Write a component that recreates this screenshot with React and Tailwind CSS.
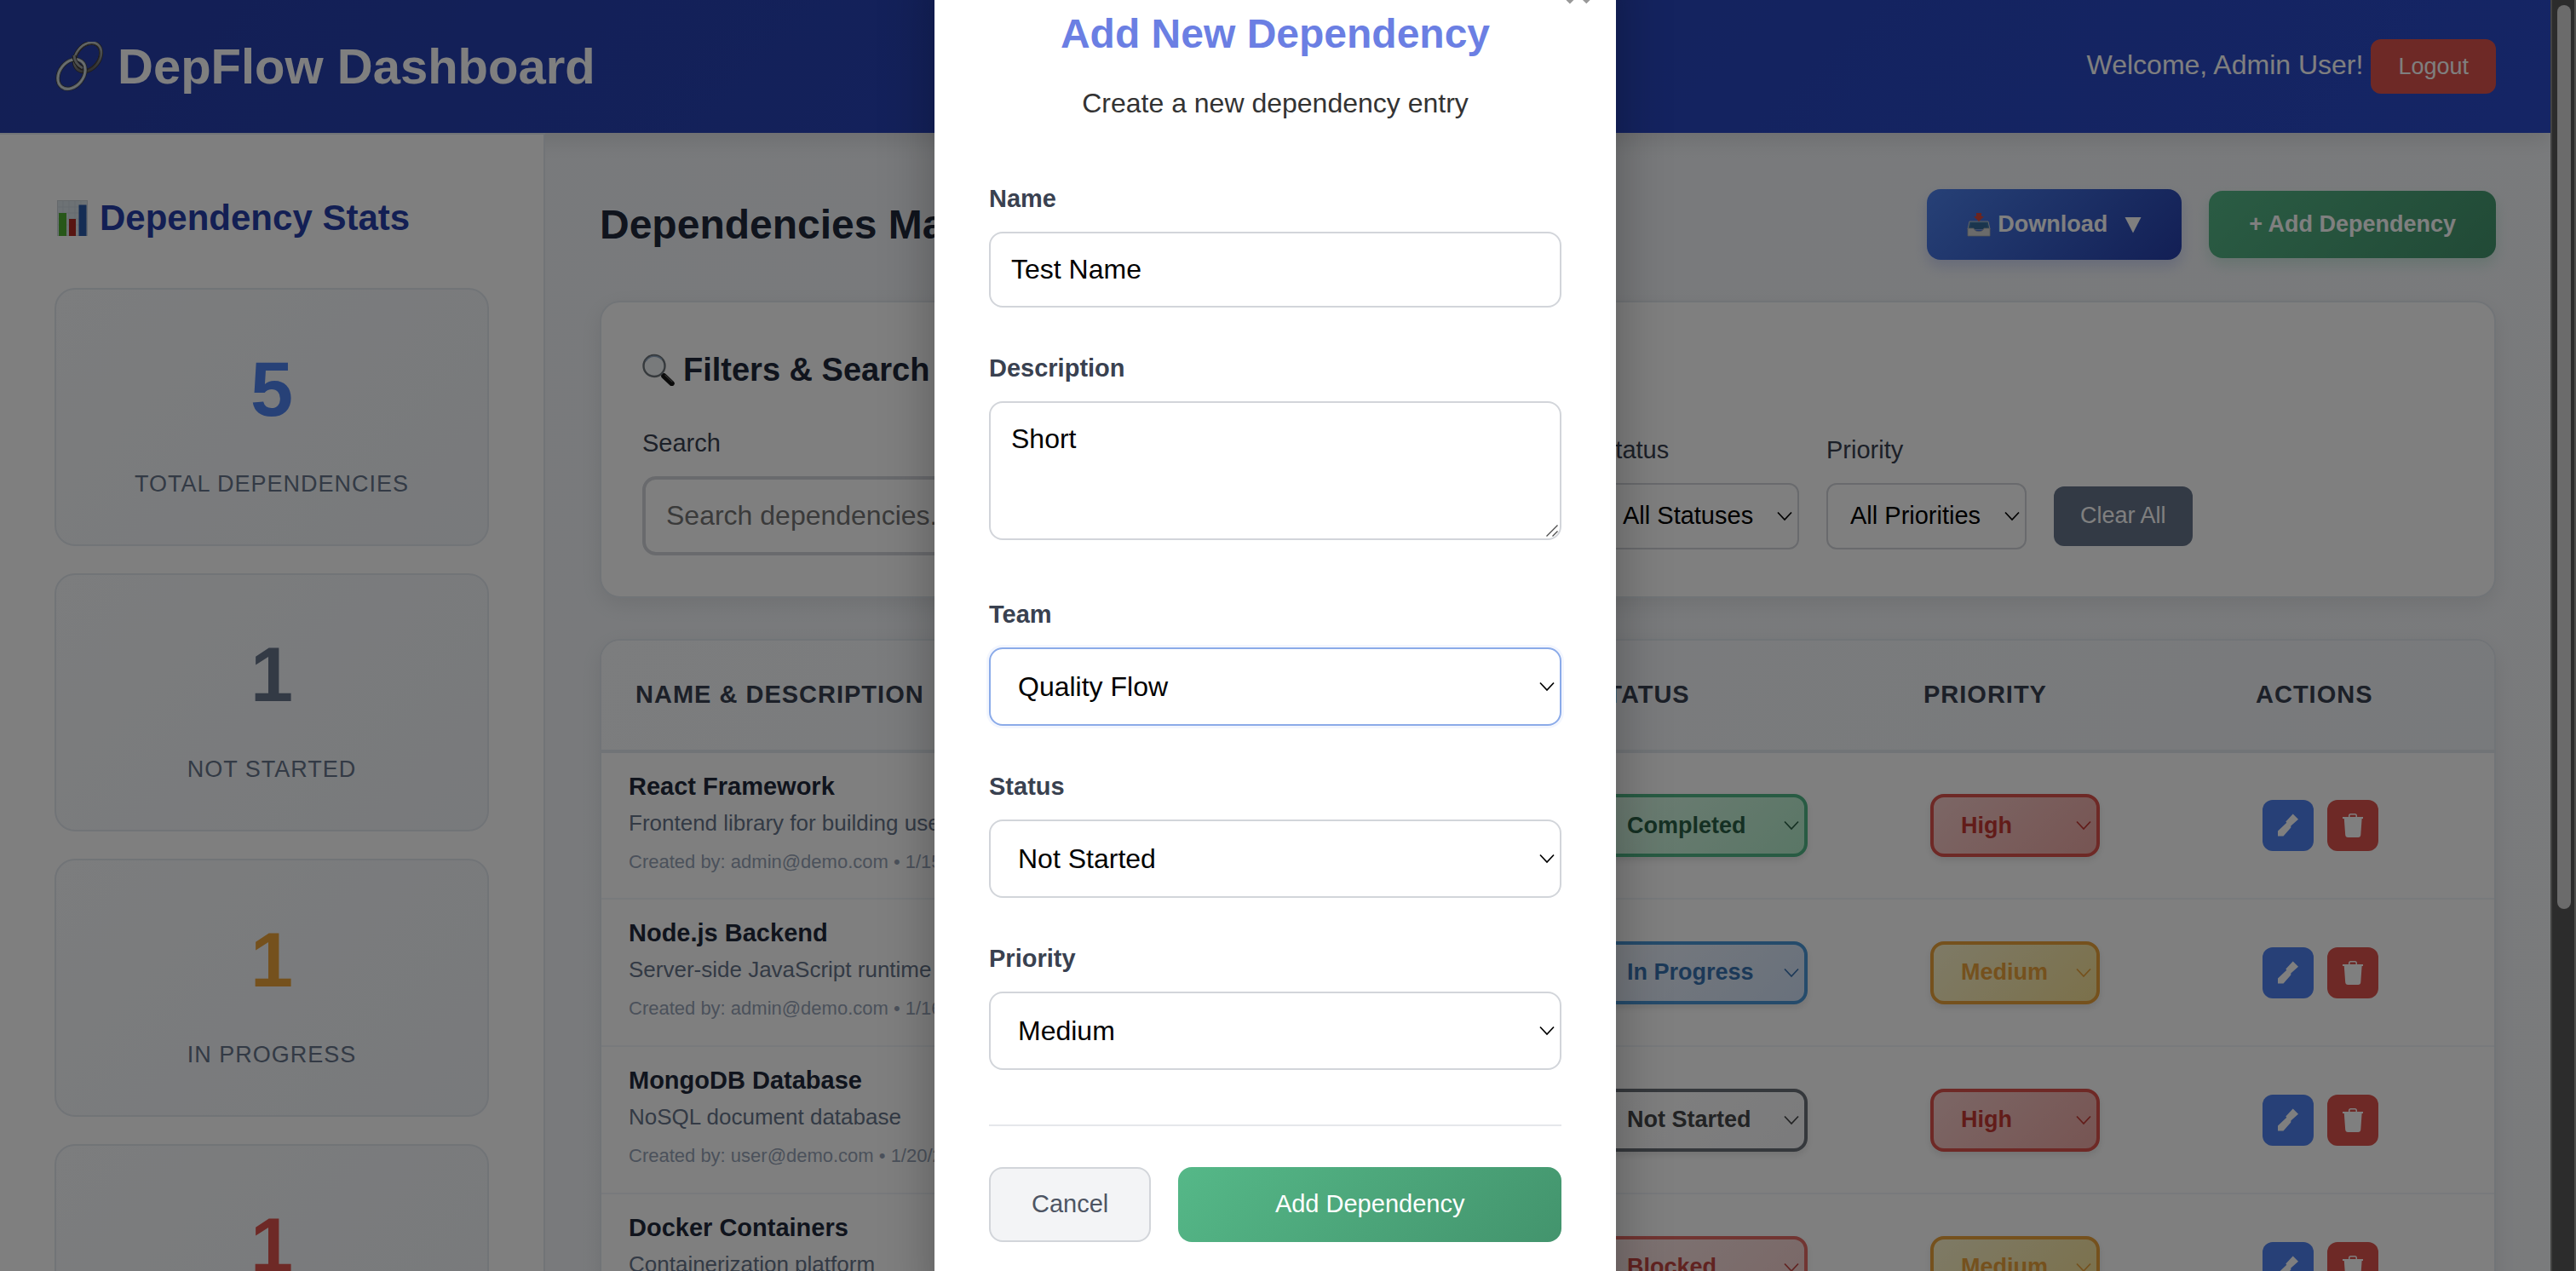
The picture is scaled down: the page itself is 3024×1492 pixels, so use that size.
import React, { useState } from "react";

const STATUS_STYLES = {
  Completed: "border-[#50b787] bg-linear-135 from-[#dcf9e8] to-[#b4edcc] text-[#2b6147]",
  "In Progress": "border-[#4b97d6] bg-linear-135 from-[#eef3fb] to-[#d2e2f8] text-[#3973b1]",
  "Not Started": "border-[#6b7079] bg-linear-135 from-[#ffffff] to-[#f6f6f8] text-[#454749]",
  Blocked: "border-[#e36a64] bg-linear-135 from-[#fbe9e8] to-[#f4cfcd] text-[#c24642]",
};

const PRIORITY_STYLES = {
  High: "border-[#dc534c] bg-linear-135 from-[#f7cdcb] to-[#eeaaa6] text-[#c43833]",
  Medium: "border-[#eaa23a] bg-linear-135 from-[#fcf4cc] to-[#f7e296] text-[#eaa23a]",
};

const STATS = [
  { value: 5, label: "Total Dependencies", color: "text-[#4e82ee]" },
  { value: 1, label: "Not Started", color: "text-[#66748a]" },
  { value: 1, label: "In Progress", color: "text-[#eaa23a]" },
  { value: 1, label: "Blocked", color: "text-[#dc534c]" },
];

const ROWS = [
  { name: "React Framework", desc: "Frontend library for building user interfaces", by: "admin@demo.com", date: "1/15/2024", team: "Frontend", status: "Completed", priority: "High" },
  { name: "Node.js Backend", desc: "Server-side JavaScript runtime", by: "admin@demo.com", date: "1/16/2024", team: "Backend", status: "In Progress", priority: "Medium" },
  { name: "MongoDB Database", desc: "NoSQL document database", by: "user@demo.com", date: "1/20/2024", team: "Backend", status: "Not Started", priority: "High" },
  { name: "Docker Containers", desc: "Containerization platform", by: "user@demo.com", date: "1/22/2024", team: "DevOps", status: "Blocked", priority: "Medium" },
];

function ChainIcon() {
  return (
    <svg className="size-[58px] shrink-0" viewBox="0 0 58 58" fill="none" aria-hidden="true">
      <defs>
        <linearGradient id="steel" x1="0" y1="0" x2="1" y2="1">
          <stop offset="0" stopColor="#d4dde0" />
          <stop offset="0.5" stopColor="#959b9d" />
          <stop offset="1" stopColor="#4c4a4b" />
        </linearGradient>
      </defs>
      <g transform="rotate(38 39 18)">
        <ellipse cx="39" cy="18" rx="13.5" ry="18.5" stroke="#3b3735" strokeWidth="5" />
        <ellipse cx="39" cy="18" rx="13.5" ry="18.5" stroke="url(#steel)" strokeWidth="3.4" />
        <ellipse cx="39" cy="18" rx="12" ry="17" stroke="#4a4442" strokeWidth="1" />
      </g>
      <g transform="rotate(38 20 38)">
        <ellipse cx="20" cy="38" rx="14" ry="19" stroke="#35373a" strokeWidth="5" />
        <ellipse cx="20" cy="38" rx="14" ry="19" stroke="#aebabe" strokeWidth="3.6" />
        <ellipse cx="20" cy="38" rx="14" ry="19" stroke="#e3eaec" strokeWidth="1.2" />
      </g>
      <path d="M23 16c0 6 4 12 10 15" stroke="#35312f" strokeWidth="5" />
      <path d="M23 16c0 6 4 12 10 15" stroke="#9aa0a2" strokeWidth="3" />
    </svg>
  );
}

function ChartIcon() {
  return (
    <svg className="size-[42px] shrink-0" viewBox="0 0 42 42" aria-hidden="true">
      <rect x="3.5" y="0.5" width="35" height="41" fill="#dbe4ea" stroke="#cdd3d8" />
      <path d="M3 8h36M3 15h36M3 22h36M3 29h36M3 36h36M10 0v42M17 0v42M24 0v42M31 0v42" stroke="#cbd6de" strokeWidth="0.7" />
      <rect x="5" y="15" width="9" height="27" fill="#4fae33" />
      <rect x="17" y="22" width="8" height="20" fill="#b02a22" />
      <rect x="28.5" y="5.5" width="9" height="36.5" fill="#2a5ba9" />
    </svg>
  );
}

function MagnifierIcon() {
  return (
    <svg className="size-[38px] shrink-0" viewBox="0 0 38 38" fill="none" aria-hidden="true">
      <path d="M22.5 23.5l4 4" stroke="#7b7b7b" strokeWidth="4" />
      <path d="M25.5 26.5l9 8.5" stroke="#151515" strokeWidth="6.5" strokeLinecap="round" />
      <path d="M27 25.500l8 7.500" stroke="#5b5b5b" strokeWidth="1.2" strokeLinecap="round" />
      <circle cx="14" cy="14.500" r="12.5" fill="#f1f4f6" stroke="#6d747a" strokeWidth="2.400" />
      <path d="M4 9a12 12 0 0 1 19-2" stroke="#8fa6c0" strokeWidth="1.500" />
    </svg>
  );
}

function InboxIcon() {
  return (
    <svg className="size-[28px] shrink-0" viewBox="0 0 28 28" aria-hidden="true">
      <path d="M3 10h22l2 9H1z" fill="#3f78a8" stroke="#c8cccf" strokeWidth="1" />
      <path d="M5 12h18l1.500 7h-21z" fill="#356a9a" />
      <path d="M1 18h7c1 5 11 5 12 0h7v9H1z" fill="#d6d7d6" stroke="#a9abac" strokeWidth="0.8" />
      <path d="M11 0h6v4h3l-6 6-6-6h3z" fill="#d9483f" />
    </svg>
  );
}

function PencilIcon() {
  return (
    <svg className="h-[28px] w-[24px]" viewBox="0 0 24 28" fill="currentColor" aria-hidden="true">
      <path d="M17.700 0.500L24 6.800L15.300 14.500L15.300 16.500L6.500 26.600H0V20.500L10.300 10.800L9.300 9.500Z" />
    </svg>
  );
}

function TrashIcon() {
  return (
    <svg className="h-[28px] w-[24px]" viewBox="0 0 24 28" fill="currentColor" aria-hidden="true">
      <path d="M0 4h7V2.500C7 1 8 0 9.500 0h5C16 0 17 1 17 2.500V4h7v2h-1.400l-1.300 19c-.1 2-1.300 3-3 3H6.200c-1.700 0-2.900-1-3-3L1.800 6H0zM8.500 4h7V2.800c0-.8-.5-1.300-1.200-1.300H9.700c-.7 0-1.200.5-1.200 1.300z" />
    </svg>
  );
}

function Picker({ className, wrapperClass = "", inset = "right-2", options, initial, ...rest }) {
  const [value, setValue] = useState(initial);
  return (
    <div className={`relative ${wrapperClass}`}>
      <select
        className={`block w-full appearance-none outline-none ${className}`}
        value={value}
        onChange={(e) => setValue(e.target.value)}
        {...rest}
      >
        {options.map((o) => (
          <option key={o}>{o}</option>
        ))}
      </select>
      <svg
        className={`pointer-events-none absolute ${inset} top-1/2 h-[12px] w-[18px] -translate-y-1/2`}
        viewBox="0 0 18 12"
        fill="none"
        stroke="currentColor"
        strokeWidth="1.7"
        aria-hidden="true"
      >
        <path d="M1 1.500l8 8.500 8-8.500" />
      </svg>
    </div>
  );
}

function Header() {
  return (
    <header className="relative z-10 flex h-[156px] shrink-0 items-center justify-between bg-linear-135 from-[#263eaa] to-[#2a4bcb] px-16 text-white shadow-[0_8px_24px_rgba(0,0,0,0.1)]">
      <h1 className="flex items-center gap-4 text-[58px] leading-none font-bold">
        <ChainIcon />
        DepFlow Dashboard
      </h1>
      <div className="flex items-baseline gap-[9px]">
        <span className="text-[32px]">Welcome, Admin User!</span>
        <button className="h-16 rounded-xl bg-[#dc534c] px-8 text-[27px]">Logout</button>
      </div>
    </header>
  );
}

function Sidebar() {
  return (
    <aside className="relative z-10 w-[640px] shrink-0 border-t-2 border-r-2 border-[#e3e8ef] bg-white p-16">
      <h2 className="mb-12 flex items-center gap-[11px] text-[42px] leading-[68px] font-bold text-[#273ea8]">
        <ChartIcon />
        Dependency Stats
      </h2>
      <div className="flex flex-col gap-8">
        {STATS.map((s) => (
          <div
            key={s.label}
            className="rounded-3xl border-2 border-[#e3e8ef] bg-linear-135 from-[#f8fafc] to-[#f1f4f8] p-12 text-center"
          >
            <div className={`text-[90px] leading-[138px] font-bold ${s.color}`}>{s.value}</div>
            <div className="mt-5 text-[27px] leading-[45px] tracking-[1px] text-[#66748a] uppercase">{s.label}</div>
          </div>
        ))}
      </div>
    </aside>
  );
}

const filterLabel = "text-[29px] leading-[46px] text-[#394150]";
const filterSelect = "h-[78px] rounded-xl border-2 border-[#d2d5da] bg-white pl-[26px] text-[29px] text-black";

function Filters() {
  return (
    <section className="mb-12 rounded-3xl border-2 border-[#e3e8ef] bg-white p-12 shadow-[0_8px_24px_rgba(0,0,0,0.08)]">
      <h3 className="mb-8 flex items-center gap-[10px] text-[38px] leading-[62px] font-bold text-[#21293a]">
        <MagnifierIcon />
        Filters &amp; Search
      </h3>
      <div className="flex items-center gap-8">
        <div className="flex w-[860px] flex-col gap-4">
          <label htmlFor="filter-search" className={filterLabel}>Search</label>
          <input
            id="filter-search"
            type="text"
            placeholder="Search dependencies..."
            className="h-[93px] rounded-2xl border-4 border-[#d2d5da] bg-white px-6 text-[32px] placeholder:text-[#757575]"
          />
        </div>
        <div className="flex w-[199px] flex-col gap-4">
          <label htmlFor="filter-team" className={filterLabel}>Team</label>
          <Picker id="filter-team" className={filterSelect} initial="All Teams" options={["All Teams", "Quality Flow"]} />
        </div>
        <div className="flex w-[235px] flex-col gap-4">
          <label htmlFor="filter-status" className={filterLabel}>Status</label>
          <Picker id="filter-status" className={filterSelect} initial="All Statuses" options={["All Statuses", ...Object.keys(STATUS_STYLES)]} />
        </div>
        <div className="flex w-[235px] flex-col gap-4">
          <label htmlFor="filter-priority" className={filterLabel}>Priority</label>
          <Picker id="filter-priority" className={filterSelect} initial="All Priorities" options={["All Priorities", "High", "Medium", "Low"]} />
        </div>
        <button className="mt-[62px] h-[70px] rounded-xl bg-[#66748a] px-[31px] text-[27px] text-white">Clear All</button>
      </div>
    </section>
  );
}

const th = "h-[130px] px-10 text-left text-[29px] font-bold tracking-[1px] uppercase";
const pill = "h-[74px] rounded-2xl border-4 pl-8 text-[27px] font-bold shadow-[0_4px_8px_rgba(0,0,0,0.1)]";

function DependencyTable() {
  return (
    <section className="overflow-hidden rounded-3xl border-2 border-[#e3e8ef] bg-white shadow-[0_8px_24px_rgba(0,0,0,0.08)]">
      <table className="w-full table-fixed border-collapse">
        <thead className="bg-linear-135 from-[#f8fafc] to-[#f1f4f8] text-[#394150]">
          <tr className="border-b-4 border-[#e3e8ef]">
            <th className={th}>Name &amp; Description</th>
            <th className={`${th} w-[424px]`}>Team</th>
            <th className={`${th} w-[392px]`}>Status</th>
            <th className={`${th} w-[390px]`}>Priority</th>
            <th className={`${th} w-[320px]`}>Actions</th>
          </tr>
        </thead>
        <tbody>
          {ROWS.map((r) => (
            <tr key={r.name} className="h-[173px] border-b-2 border-[#f1f4f8]">
              <td className="px-8 pt-4 align-top">
                <div className="text-[29px] leading-[46px] font-bold text-[#21293a]">{r.name}</div>
                <div className="text-[26px] leading-[40px] text-[#66748a]">{r.desc}</div>
                <div className="mt-2 text-[22px] leading-[35px] text-[#96a3b6]">
                  Created by: {r.by} • {r.date}
                </div>
              </td>
              <td className="px-10 text-[29px] text-[#394150]">{r.team}</td>
              <td className="px-12">
                <Picker
                  aria-label={`Status of ${r.name}`}
                  wrapperClass={`w-[248px] bg-none! bg-transparent! ${STATUS_STYLES[r.status]}`}
                  className={`${pill} ${STATUS_STYLES[r.status]}`}
                  inset="right-[10px]"
                  initial={r.status}
                  options={Object.keys(STATUS_STYLES)}
                />
              </td>
              <td className="px-12">
                <Picker
                  aria-label={`Priority of ${r.name}`}
                  wrapperClass={`w-[199px] bg-none! bg-transparent! ${PRIORITY_STYLES[r.priority]}`}
                  className={`${pill} ${PRIORITY_STYLES[r.priority]}`}
                  inset="right-[10px]"
                  initial={r.priority}
                  options={["High", "Medium", "Low"]}
                />
              </td>
              <td className="px-12">
                <div className="flex gap-4 text-white">
                  <button aria-label={`Edit ${r.name}`} className="flex size-[60px] items-center justify-center rounded-xl bg-[#4e80ee]">
                    <PencilIcon />
                  </button>
                  <button aria-label={`Delete ${r.name}`} className="flex size-[60px] items-center justify-center rounded-xl bg-[#dc534c]">
                    <TrashIcon />
                  </button>
                </div>
              </td>
            </tr>
          ))}
        </tbody>
      </table>
    </section>
  );
}

const field = "rounded-2xl border-2 bg-white text-[32px] text-black";
const fieldLabel = "mb-4 block text-[29px] leading-[46px] font-bold text-[#394150]";

function AddDependencyModal() {
  return (
    <div className="absolute inset-0 z-20 flex items-start justify-center overflow-hidden bg-black/50">
      <div
        role="dialog"
        aria-labelledby="modal-title"
        className="relative -mt-16 w-[800px] bg-white p-16 shadow-[0_20px_60px_rgba(0,0,0,0.3)]"
      >
        <button aria-label="Close" className="absolute top-[26px] right-7 text-[56px] leading-[56px] font-bold text-[#999999]">
          ×
        </button>
        <h2 id="modal-title" className="text-center text-[48px] leading-[80px] font-bold text-[#6b7fe3]">
          Add New Dependency
        </h2>
        <p className="mt-4 mb-16 text-center text-[32px] leading-[50px] text-[#333333]">Create a new dependency entry</p>
        <form onSubmit={(e) => e.preventDefault()}>
          <div className="mb-12">
            <label htmlFor="dep-name" className={fieldLabel}>Name</label>
            <input id="dep-name" type="text" defaultValue="Test Name" className={`${field} block h-[89px] w-full border-[#d2d5da] px-6`} />
          </div>
          <div className="mb-16">
            <label htmlFor="dep-description" className={fieldLabel}>Description</label>
            <div className="relative">
              <textarea
                id="dep-description"
                defaultValue="Short"
                className={`${field} block h-[163px] w-full resize-y border-[#d2d5da] px-6 py-6 leading-[37px] [&::-webkit-resizer]:hidden`}
              />
              <svg className="pointer-events-none absolute right-1 bottom-1 size-[14px]" viewBox="0 0 14 14" stroke="#4a4a4a" strokeWidth="1.3" aria-hidden="true">
                <path d="M0.500 13.500L13.500 0.500M7.500 13.500L13.500 7.500" />
              </svg>
            </div>
          </div>
          <div className="mb-12">
            <label htmlFor="dep-team" className={fieldLabel}>Team</label>
            <Picker
              id="dep-team"
              className={`${field} h-[92px] border-[#8babe9] pl-8 shadow-[0_0_0_3px_rgba(78,130,238,0.07)]`}
              initial="Quality Flow"
              options={["Quality Flow"]}
            />
          </div>
          <div className="mb-12">
            <label htmlFor="dep-status" className={fieldLabel}>Status</label>
            <Picker id="dep-status" className={`${field} h-[92px] border-[#d2d5da] pl-8`} initial="Not Started" options={Object.keys(STATUS_STYLES)} />
          </div>
          <div className="mb-16">
            <label htmlFor="dep-priority" className={fieldLabel}>Priority</label>
            <Picker id="dep-priority" className={`${field} h-[92px] border-[#d2d5da] pl-8`} initial="Medium" options={["High", "Medium", "Low"]} />
          </div>
          <div className="flex gap-8 border-t-2 border-[#e5e7eb] pt-12">
            <button type="button" className="h-[88px] rounded-2xl border-2 border-[#d2d5da] bg-[#f3f4f6] px-12 text-[29px] text-[#4e5563]">
              Cancel
            </button>
            <button type="submit" className="h-[88px] flex-1 rounded-2xl bg-linear-135 from-[#55b888] to-[#43946d] text-[29px] text-white">
              Add Dependency
            </button>
          </div>
        </form>
      </div>
    </div>
  );
}

export default function App() {
  return (
    <div className="flex h-screen overflow-hidden font-['Liberation_Sans',Arial,sans-serif]">
      <div className="relative flex min-w-0 flex-1 flex-col overflow-hidden bg-linear-135 from-[#f1f4f8] to-[#f4f6f9]">
        <Header />
        <div className="flex flex-1">
          <Sidebar />
          <main className="min-w-0 flex-1 px-16 pt-[66px]">
            <div className="mb-12 flex items-center justify-between">
              <h2 className="text-[48px] leading-[77px] font-bold text-[#21293a]">Dependencies Management</h2>
              <div className="flex items-center gap-8 text-[27px] font-bold text-white">
                <button className="flex h-[83px] items-center rounded-2xl bg-linear-135 from-[#4e82ee] to-[#263eaa] px-[47px] shadow-[0_8px_16px_rgba(60,90,220,0.2)]">
                  <InboxIcon />
                  <span className="ml-2">Download</span>
                  <svg className="ml-5 size-5" viewBox="0 0 20 20" fill="currentColor" aria-hidden="true">
                    <path d="M0.500 1h19L10 19.500z" />
                  </svg>
                </button>
                <button className="h-[79px] rounded-2xl bg-linear-135 from-[#55b888] to-[#43946d] px-[47px] shadow-[0_8px_16px_rgba(60,180,130,0.2)]">
                  + Add Dependency
                </button>
              </div>
            </div>
            <Filters />
            <DependencyTable />
          </main>
        </div>
        <AddDependencyModal />
      </div>
      <div className="w-[30px] shrink-0 border-r-2 border-l-2 border-r-[#4f4f4d] border-l-[#424242] bg-[#2c2c2c] px-[6px] pt-[6px] pr-1">
        <div className="h-[1061px] w-4 rounded-full bg-[#6b6b6b]" />
      </div>
    </div>
  );
}
